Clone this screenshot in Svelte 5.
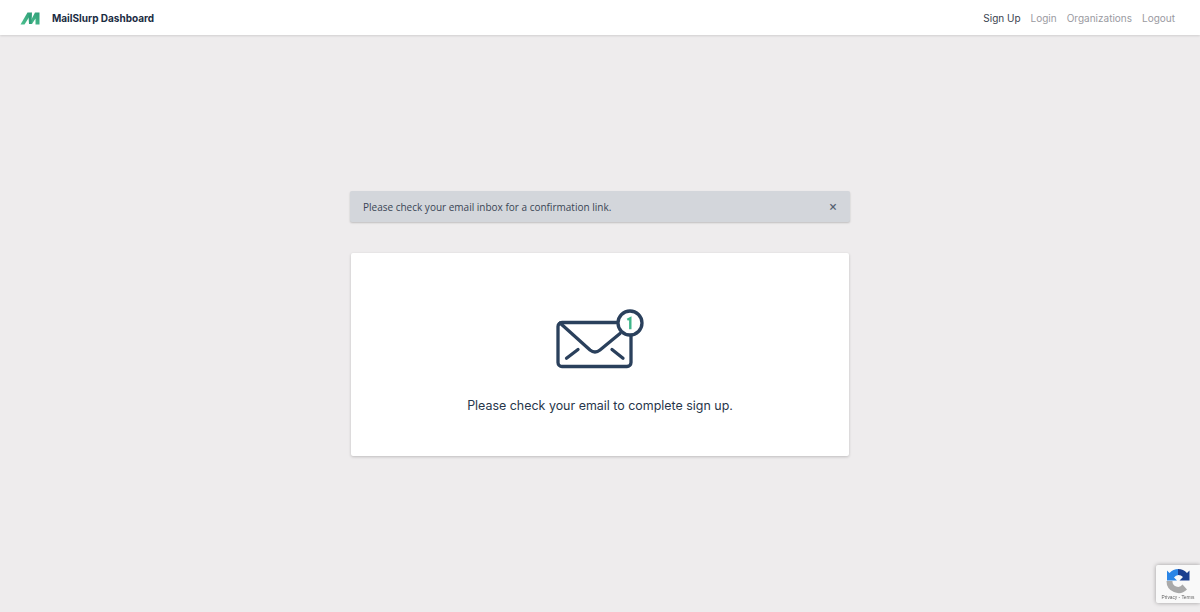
<script>
  const links = [
    { label: 'Sign Up', active: true },
    { label: 'Login' },
    { label: 'Organizations' },
    { label: 'Logout' }
  ];
</script>

<div class="page">
  <header class="nav">
    <div class="brand">
      <svg class="logo" width="20" height="14" viewBox="0 0 20 14" aria-hidden="true">
        <defs>
          <linearGradient id="lg" x1="0" y1="1" x2="1" y2="0">
            <stop offset="0" stop-color="#4cc08f" />
            <stop offset="1" stop-color="#2f9e78" />
          </linearGradient>
        </defs>
        <path d="M0.5 13.5 L7.5 1.5 L12 1.5 L4.5 13.5 Z" fill="url(#lg)" />
        <path d="M9 13 L15 1.5 L19.5 1.5 L19.5 13.5 L15.5 13.5 L15.5 7.5 L12 13 Z" fill="url(#lg)" />
        <path d="M8.5 5 L12 1.5 L11.5 13 L9 13 Z" fill="#2f9e78" />
      </svg>
      <span class="brand-name">MailSlurp Dashboard</span>
    </div>
    <nav class="links">
      {#each links as link}
        <a href="#top" class:active={link.active}>{link.label}</a>
      {/each}
    </nav>
  </header>

  <main class="main">
    <div class="stack">
      <div class="alert">
        <span>Please check your email inbox for a confirmation link.</span>
        <span class="close">×</span>
      </div>
      <section class="card">
        <svg class="mail" width="90" height="62" viewBox="0 0 90 62" fill="none" aria-hidden="true">
          <rect x="3" y="13.5" width="73" height="44" rx="4" stroke="#2a405c" stroke-width="3.3" />
          <path d="M5 14 L35 41 Q40 45 45 41 L65 24.5" stroke="#2a405c" stroke-width="3.3" stroke-linecap="round" />
          <path d="M11.5 49.3 L23 40.5 M68 49.3 L57 40.5" stroke="#2a405c" stroke-width="3.3" stroke-linecap="round" />
          <circle cx="75" cy="14" r="12" fill="#fff" stroke="#2a405c" stroke-width="3.3" />
          <path d="M72.3 10.8 L75.3 9.2 L75.3 20.3" stroke="#3fb58a" stroke-width="2.4" />
        </svg>
        <p>Please check your email to complete sign up.</p>
      </section>
    </div>
  </main>

  <aside class="recaptcha">
    <svg width="26" height="26" viewBox="0 0 26 26" aria-hidden="true">
      <path d="M1.5 13 L7.5 13 A5.5 5.5 0 0 0 17.5 16.5 L22 21.5 A12 12 0 0 1 1.5 13 Z" fill="#a9a9a9" />
      <path d="M13.5 1 A12 12 0 0 0 4.5 5 L2 2.5 L2 12.5 L12 12.5 L9 9.5 A6 6 0 0 1 13.5 7 Z" fill="#2a85e6" />
      <path d="M13 1 A12 12 0 0 1 22 5 L24.5 2.5 L24.5 12.5 L14.5 12.5 L18 9 A6.5 6.5 0 0 0 13 7 Z" fill="#1a3f8f" />
    </svg>
    <span>Privacy - Terms</span>
  </aside>
</div>

<style>
  :global(body) {
    margin: 0;
    background: #eeeced;
  }
  .page {
    height: 612px;
    display: flex;
    flex-direction: column;
    font-family: Inter, "Liberation Sans", sans-serif;
    color: #1f2d3d;
    overflow: hidden;
  }
  .nav {
    height: 35px;
    flex: none;
    background: #fff;
    box-shadow: 0 1px 2px rgba(0, 0, 0, 0.12);
    display: flex;
    align-items: center;
    justify-content: space-between;
    padding: 0 25px 0 20px;
  }
  .brand {
    display: flex;
    align-items: center;
    gap: 12px;
  }
  .logo {
    display: block;
  }
  .brand-name {
    font-size: 10px;
    font-weight: 700;
    color: #1a2b42;
  }
  .links {
    display: flex;
    gap: 10px;
  }
  .links a {
    font-size: 10px;
    color: #9a9a9f;
    text-decoration: none;
  }
  .links a.active {
    color: #3a4350;
  }
  .main {
    flex: 1;
    display: flex;
    align-items: center;
    justify-content: center;
  }
  .stack {
    width: 500px;
    display: flex;
    flex-direction: column;
    gap: 31px;
    align-items: center;
  }
  .alert {
    width: 100%;
    box-sizing: border-box;
    height: 31px;
    background: #d3d6db;
    border-radius: 2px;
    box-shadow: 0 1px 2px rgba(0, 0, 0, 0.2);
    padding: 0 13px;
    display: flex;
    align-items: center;
    justify-content: space-between;
    font-family: "Open Sans", "Noto Sans", sans-serif;
    font-size: 10px;
    color: #3a4555;
  }
  .close {
    font-size: 14px;
    font-weight: 600;
    color: #566172;
    line-height: 1;
  }
  .card {
    width: 498px;
    height: 203px;
    box-sizing: border-box;
    background: #fff;
    border-radius: 2px;
    box-shadow: 0 1px 3px rgba(0, 0, 0, 0.2);
    display: flex;
    flex-direction: column;
    align-items: center;
    padding-top: 56px;
  }
  .mail {
    display: block;
  }
  .card p {
    margin: 27px 0 0;
    font-size: 12.45px;
    color: #27364a;
  }
  .recaptcha {
    position: fixed;
    right: 0;
    bottom: 9px;
    width: 44px;
    height: 38px;
    background: #f9f9f9;
    box-shadow: 0 0 4px rgba(0, 0, 0, 0.35);
    border-radius: 2px 0 0 2px;
    display: flex;
    flex-direction: column;
    align-items: center;
    padding-top: 3px;
    box-sizing: border-box;
  }
  .recaptcha svg {
    display: block;
  }
  .recaptcha span {
    font-family: "Liberation Sans", sans-serif;
    font-size: 4.8px;
    color: #666;
    white-space: nowrap;
    margin-top: 1px;
  }
</style>
